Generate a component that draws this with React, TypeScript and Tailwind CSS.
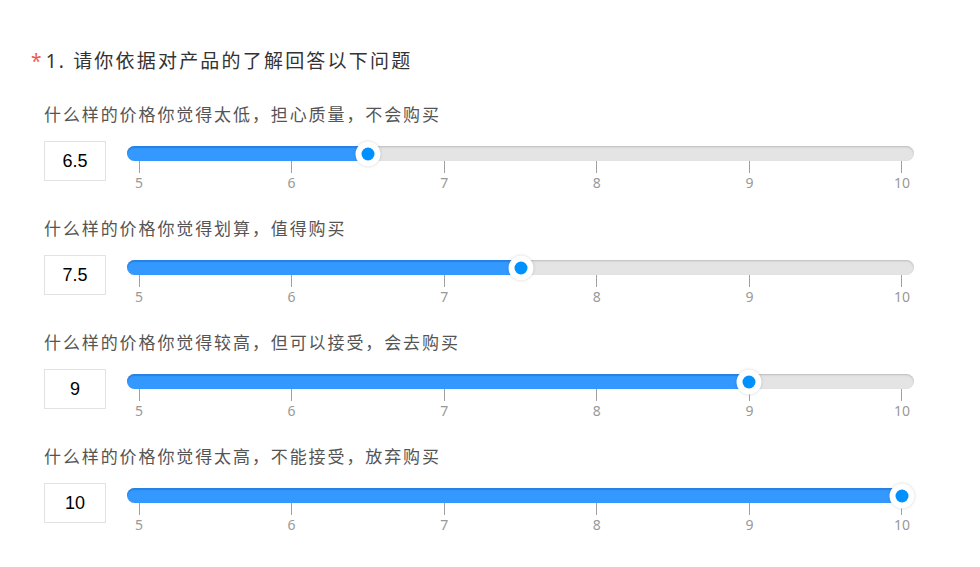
import React from "react";

const questions = [
  { label: "什么样的价格你觉得太低，担心质量，不会购买", value: 6.5 },
  { label: "什么样的价格你觉得划算，值得购买", value: 7.5 },
  { label: "什么样的价格你觉得较高，但可以接受，会去购买", value: 9 },
  { label: "什么样的价格你觉得太高，不能接受，放弃购买", value: 10 },
];

const ticks = [5, 6, 7, 8, 9, 10];
const MIN = 5;
const MAX = 10;
const TRACK_W = 787;
const PAD = 12;

function Slider({ value }: { value: number }) {
  const pos = PAD + ((value - MIN) / (MAX - MIN)) * (TRACK_W - PAD * 2);
  return (
    <div className="relative w-[787px] pt-[5px]">
      <div className="relative h-[15px] rounded-full bg-[#e4e4e4] shadow-[inset_0_1px_2px_rgba(0,0,0,0.18)]">
        <div
          className="absolute left-0 top-0 h-[15px] rounded-full bg-[#3399ff] shadow-[inset_0_2px_1px_rgba(0,60,140,0.25)]"
          style={{ width: pos }}
        />
        <div
          className="absolute top-1/2 flex h-[25px] w-[25px] -translate-x-1/2 -translate-y-1/2 items-center justify-center rounded-full bg-white shadow-[0_0_3px_rgba(0,0,0,0.18)]"
          style={{ left: pos }}
        >
          <div className="h-[13px] w-[13px] rounded-full bg-[#0091ff]" />
        </div>
      </div>
      <div className="flex justify-between px-[12px]">
        {ticks.map((t) => (
          <div key={t} className="flex w-0 flex-col items-center">
            <div className="h-[12px] w-px bg-[#a0a0a0]" />
            <span className="mt-[2px] text-[14px] leading-[16px] text-[#999]">{t}</span>
          </div>
        ))}
      </div>
    </div>
  );
}

export default function App() {
  return (
    <div
      className="min-h-[567px] w-[980px] bg-white pt-[47px]"
      style={{ fontFamily: '"Noto Sans", "Noto Sans CJK SC", sans-serif' }}
    >
      <h2 className="flex items-center pl-[31px] text-[19px] leading-[28px] tracking-[2.2px] text-[#333]">
        <span className="mr-[2px] text-[#f0594a]">*</span>
        1. 请你依据对产品的了解回答以下问题
      </h2>
      <div className="mt-[28px] flex flex-col gap-[26px] pl-[44px]">
        {questions.map((q) => (
          <div key={q.label}>
            <p className="text-[17px] leading-[24px] tracking-[1.9px] text-[#555]">{q.label}</p>
            <div className="mt-[14px] flex items-start gap-[21px]">
              <div className="flex h-[40px] w-[62px] items-center justify-center border border-[#e2e2e2] font-['Liberation_Sans',sans-serif] text-[18px] text-black">
                {q.value}
              </div>
              <Slider value={q.value} />
            </div>
          </div>
        ))}
      </div>
    </div>
  );
}
